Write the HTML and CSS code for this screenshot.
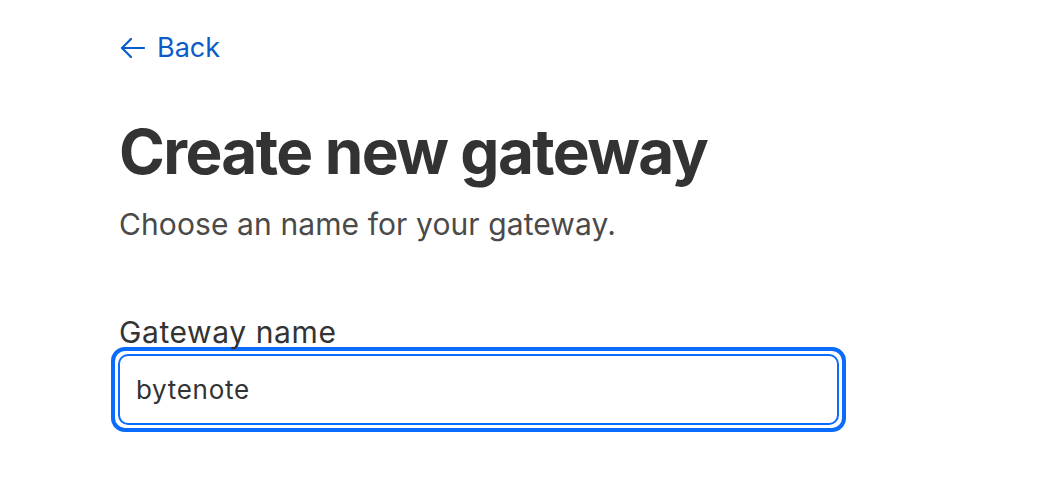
FILE: index.html
```html
<!DOCTYPE html>
<html>
<head>
	<meta charset="utf-8">
	<meta name="viewport" content="width=device-width, initial-scale=1">
	<title>Create new gateway</title>
	<link rel="stylesheet" href="styles.css">
</head>
<body>
	<div class="page">
		<a class="back" href="#">
			<svg class="back-icon" width="27" height="24" viewBox="0 0 27 24" fill="none" stroke="currentColor" stroke-width="2.2" stroke-linecap="round" stroke-linejoin="round">
				<path d="M25 12H3"/>
				<path d="M12 3L3 12l9 9"/>
			</svg>
			Back
		</a>

		<h1 class="title">Create new gateway</h1>
		<p class="subtitle">Choose an name for your gateway.</p>

		<form class="form">
			<label class="field-label" for="gwname">Gateway name</label>
			<div class="field-ring">
				<input class="field-input" type="text" id="gwname" value="bytenote">
			</div>
		</form>
	</div>
</body>
</html>
```

FILE: styles.css
```css
body
{
	margin: 0;
	font-family: Inter, "Noto Sans", sans-serif;
	background: #fff;
	color: #333;
}
.page
{
	padding: 31px 0 0 119px;
}
.back
{
	display: inline-flex;
	align-items: center;
	gap: 11px;
	color: #0b5cc9;
	text-decoration: none;
	font-size: 27px;
	line-height: 34px;
}
.title
{
	margin: 48px 0 0 0;
	font-size: 62px;
	font-weight: 700;
	letter-spacing: -1.6px;
	line-height: 78px;
	color: #333;
}
.subtitle
{
	margin: 15px 0 0 0;
	font-size: 30px;
	letter-spacing: 0.1px;
	line-height: 36px;
	color: #4a4a4a;
}
.form
{
	margin-top: 74px;
}
.field-label
{
	display: block;
	font-size: 30px;
	letter-spacing: 0.6px;
	line-height: 32px;
	color: #333;
}
.field-ring
{
	margin: -1px 0 0 -8px;
	width: 721px;
	padding: 3px;
	border: 4px solid #0a6cff;
	border-radius: 14px;
}
.field-input
{
	display: block;
	box-sizing: border-box;
	width: 100%;
	height: 71px;
	padding: 0 16px;
	border: 2px solid #0a6cff;
	border-radius: 10px;
	font-family: inherit;
	font-size: 26px;
	letter-spacing: 0.7px;
	color: #333;
	outline: none;
}
```
